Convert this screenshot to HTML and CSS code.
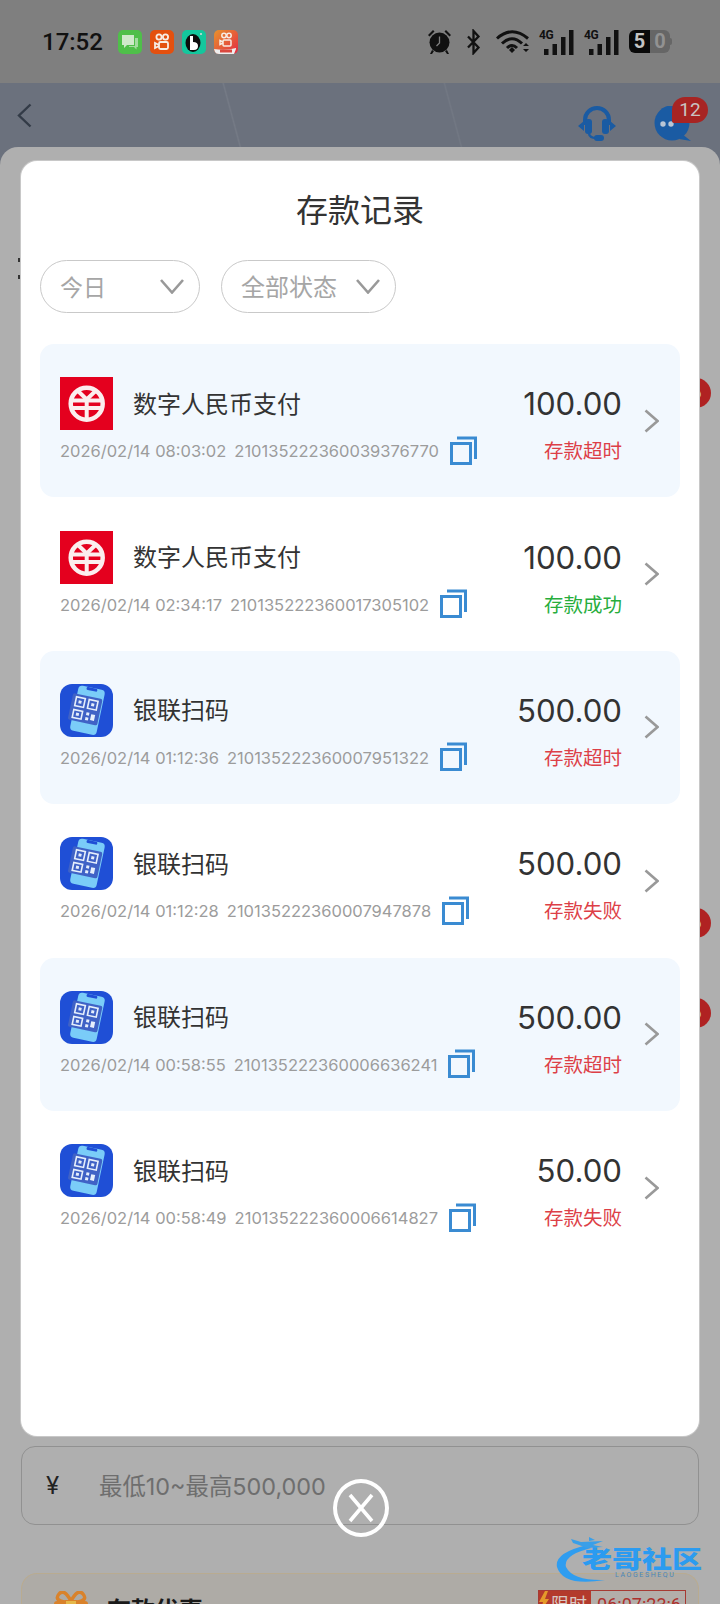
FILE: index.html
```html
<!DOCTYPE html>
<html lang="zh-CN">
<head>
    <meta charset="UTF-8">
    <meta name="viewport" content="width=device-width, initial-scale=1.0">
    <title>存款记录</title>
    <link rel="stylesheet" href="styles.css">
</head>
<body>

    <svg class="icon-defs" aria-hidden="true">
        <symbol id="i-yuan" viewBox="0 0 53 53">
            <rect width="53" height="53" fill="#e4001e"/>
            <circle cx="26.7" cy="26.7" r="16" fill="none" stroke="#fbeeee" stroke-width="4.500"/>
            <path d="M17 13l9.700 9.500L36.500 13" fill="none" stroke="#fbeeee" stroke-width="4"/>
            <path d="M12 23.500h29.500M12 31h29.500M26.700 22V42" fill="none" stroke="#fbeeee" stroke-width="4"/>
        </symbol>
        <symbol id="i-scan" viewBox="0 0 53 53">
            <rect width="53" height="53" rx="12" fill="#1f4fd6"/>
            <g transform="rotate(12 26 26)">
                <rect x="14" y="3" width="27" height="46" rx="4" fill="#7accf8"/>
                <rect x="22" y="3" width="11" height="3" rx="1.500" fill="#1f4fd6"/>
                <rect x="10" y="12" width="30" height="27" rx="2" fill="#3f62c6"/>
                <g fill="none" stroke="#e6effc" stroke-width="1.600">
                    <rect x="14" y="15" width="9" height="9"/>
                    <rect x="27" y="15" width="9" height="9"/>
                    <rect x="14" y="28" width="9" height="8"/>
                </g>
                <g fill="#e6effc">
                    <rect x="17" y="18" width="3" height="3"/>
                    <rect x="30" y="18" width="3" height="3"/>
                    <rect x="17" y="30.500" width="3" height="3"/>
                    <rect x="27" y="28" width="3" height="3"/>
                    <rect x="32" y="29" width="4" height="6"/>
                    <rect x="27" y="33" width="3" height="3"/>
                </g>
            </g>
        </symbol>
        <symbol id="i-copy" viewBox="0 0 27 29">
            <rect x="1.500" y="7.500" width="19" height="20" fill="none" stroke="#3a8bd2" stroke-width="3"/>
            <path d="M7 2h18.500v21" fill="none" stroke="#3a8bd2" stroke-width="3"/>
        </symbol>
        <symbol id="i-right" viewBox="0 0 15 24">
            <path d="M1.500 1.500L13.500 12L1.500 22.500" fill="none" stroke="#999" stroke-width="2.600"/>
        </symbol>
        <symbol id="i-down" viewBox="0 0 24 15">
            <path d="M1 1L12 13.500L23 1" fill="none" stroke="#999" stroke-width="2.600"/>
        </symbol>
        <symbol id="i-cell" viewBox="0 0 35 26">
            <rect x="5" y="20" width="4.500" height="6"/>
            <rect x="13.500" y="15" width="4.500" height="11"/>
            <rect x="22" y="8" width="4.500" height="18"/>
            <rect x="30" y="1" width="4.500" height="25"/>
        </symbol>
    </svg>

    <div class="page">
        <div class="status-bar">
            <span class="clock">17:52</span>
            <div class="app-tiles">
                <svg class="tile" viewBox="0 0 24 24">
                    <rect width="24" height="24" rx="5" fill="#4fbf4a"/>
                    <path d="M4 5h12v10H9l-3 3v-3H4z" fill="#cfe9cb"/>
                    <path d="M17 8h3v9h-1.500v2.500L16 17h-5v-1h6z" fill="#a3dca0"/>
                </svg>
                <svg class="tile" viewBox="0 0 24 24">
                    <rect width="24" height="24" rx="5" fill="#e4500f"/>
                    <g fill="none" stroke="#f7ece4" stroke-width="1.800">
                        <circle cx="9" cy="7" r="2.600"/>
                        <circle cx="15.500" cy="7" r="2.600"/>
                        <rect x="9" y="12" width="9" height="7" rx="1.500"/>
                        <path d="M9 15l-4-2v5l4-2"/>
                    </g>
                </svg>
                <svg class="tile" viewBox="0 0 24 24">
                    <rect width="24" height="24" rx="5" fill="#14c79d"/>
                    <ellipse cx="11" cy="13" rx="7.500" ry="9" fill="#0d0d0d"/>
                    <path d="M8 6h3v6q5 0 5 4t-4 4H8z" fill="#fff"/>
                    <circle cx="19" cy="4" r="1" fill="#ddd"/>
                </svg>
                <svg class="tile" viewBox="0 0 24 24">
                    <defs>
                        <linearGradient id="tile-fade" x1="0" y1="0" x2="1" y2="1">
                            <stop offset="0" stop-color="#e8932c"/>
                            <stop offset="1" stop-color="#e32b45"/>
                        </linearGradient>
                    </defs>
                    <rect width="24" height="24" rx="5" fill="url(#tile-fade)"/>
                    <g fill="none" stroke="#f7ece4" stroke-width="1.500">
                        <circle cx="10" cy="5.500" r="2.200"/>
                        <circle cx="15" cy="5.500" r="2.200"/>
                        <rect x="9" y="10" width="8" height="6" rx="1"/>
                        <path d="M9 12l-3-1.500v4L9 13"/>
                    </g>
                    <path d="M0 19q12 2 22-1v1l-2 5H5q-3 0-4-2z" fill="#eee"/>
                    <rect x="6" y="19.500" width="12" height="3" fill="#d9483f"/>
                </svg>
            </div>
            <div class="status-icons">
                <svg class="icon-alarm" viewBox="0 0 25 26">
                    <path d="M1 6l5-5 1.500 1.500-5 5zM24 6l-5-5-1.500 1.500 5 5zM5 21l-2 4h2l2-3zM20 21l2 4h-2l-2-3z" fill="#111"/>
                    <circle cx="12.500" cy="13.500" r="10" fill="#111"/>
                    <path d="M12.500 7.500v6.500l-3 3" fill="none" stroke="#7f7f7f" stroke-width="1.300"/>
                </svg>
                <svg class="icon-bt" viewBox="0 0 15 26">
                    <path d="M2 7.500L12.500 18.500L7.500 24V2L12.500 7.500L2 18.500" fill="none" stroke="#111" stroke-width="2.300"/>
                </svg>
                <svg class="icon-wifi" viewBox="0 0 33 25">
                    <g fill="none" stroke="#111" stroke-width="3">
                        <path d="M1 9.500Q16-4 32 9.500"/>
                        <path d="M6 14.500Q16 5 26 14.500"/>
                        <path d="M11 19Q16 14 21 19"/>
                    </g>
                    <path d="M13 21l3-3 3 3-3 3z" fill="#111"/>
                    <path d="M27 17h6l-3-3zM27 20h6l-3 3z" fill="#111"/>
                </svg>
                <div class="cell">
                    <span class="cell-tag">4G</span>
                    <svg class="cell-bars"><use href="#i-cell"/></svg>
                </div>
                <div class="cell">
                    <span class="cell-tag">4G</span>
                    <svg class="cell-bars"><use href="#i-cell"/></svg>
                </div>
                <div class="battery">
                    <span class="battery-full">5</span><span class="battery-empty">0</span>
                </div>
            </div>
        </div>

        <div class="app-bar">
            <svg class="back-icon" viewBox="0 0 15 25">
                <path d="M13.500 1.500L2 12.500L13.500 23.500" fill="none" stroke="#333b47" stroke-width="2.400"/>
            </svg>
            <div class="app-actions">
                <svg class="icon-headset" viewBox="0 0 40 36">
                    <path d="M8 19V14a12 12 0 0 1 24 0v5" fill="none" stroke="#1a5ba3" stroke-width="4"/>
                    <rect x="8" y="13" width="7" height="15" rx="3" fill="#1a5ba3"/>
                    <rect x="25" y="13" width="7" height="15" rx="3" fill="#1a5ba3"/>
                    <path d="M1 20l6-5v10zM39 20l-6-5v10z" fill="#1a5ba3"/>
                    <path d="M12 28q1 4 7 4" fill="none" stroke="#1a5ba3" stroke-width="2.400"/>
                    <rect x="17" y="29" width="10" height="6" rx="3" fill="#1a5ba3"/>
                </svg>
                <div class="chat">
                    <svg class="icon-chat" viewBox="0 0 38 36">
                        <circle cx="18" cy="17" r="17.500" fill="#1a5ba3"/>
                        <path d="M28 28l9 7-12-2z" fill="#1a5ba3"/>
                        <circle cx="9" cy="18" r="2.700" fill="#b9c6d6"/>
                        <circle cx="17" cy="18" r="2.700" fill="#b9c6d6"/>
                    </svg>
                    <span class="chat-count">12</span>
                </div>
            </div>
        </div>

        <div class="sheet">
            <span class="peek-marks"></span>
            <span class="peek-dot peek-dot-a">6</span>
            <span class="peek-dot peek-dot-b">6</span>
            <span class="peek-dot peek-dot-c">6</span>

            <div class="modal">
                <h2 class="modal-title">存款记录</h2>
                <div class="filters">
                    <div class="pill pill-day">
                        <span class="pill-text">今日</span>
                        <svg class="pill-arrow"><use href="#i-down"/></svg>
                    </div>
                    <div class="pill pill-state">
                        <span class="pill-text">全部状态</span>
                        <svg class="pill-arrow"><use href="#i-down"/></svg>
                    </div>
                </div>

                <div class="records">
                    <div class="record shaded">
                        <div class="record-main">
                            <div class="record-head">
                                <svg class="pay-icon"><use href="#i-yuan"/></svg>
                                <span class="pay-name">数字人民币支付</span>
                            </div>
                            <div class="record-meta">
                                <span>2026/02/14 08:03:02</span>
                                <span>210135222360039376770</span>
                                <svg class="copy-icon"><use href="#i-copy"/></svg>
                            </div>
                        </div>
                        <div class="record-side">
                            <div class="amount">100.00</div>
                            <div class="state failed">存款超时</div>
                        </div>
                        <svg class="row-arrow"><use href="#i-right"/></svg>
                    </div>

                    <div class="record">
                        <div class="record-main">
                            <div class="record-head">
                                <svg class="pay-icon"><use href="#i-yuan"/></svg>
                                <span class="pay-name">数字人民币支付</span>
                            </div>
                            <div class="record-meta">
                                <span>2026/02/14 02:34:17</span>
                                <span>210135222360017305102</span>
                                <svg class="copy-icon"><use href="#i-copy"/></svg>
                            </div>
                        </div>
                        <div class="record-side">
                            <div class="amount">100.00</div>
                            <div class="state done">存款成功</div>
                        </div>
                        <svg class="row-arrow"><use href="#i-right"/></svg>
                    </div>

                    <div class="record shaded">
                        <div class="record-main">
                            <div class="record-head">
                                <svg class="pay-icon"><use href="#i-scan"/></svg>
                                <span class="pay-name">银联扫码</span>
                            </div>
                            <div class="record-meta">
                                <span>2026/02/14 01:12:36</span>
                                <span>210135222360007951322</span>
                                <svg class="copy-icon"><use href="#i-copy"/></svg>
                            </div>
                        </div>
                        <div class="record-side">
                            <div class="amount">500.00</div>
                            <div class="state failed">存款超时</div>
                        </div>
                        <svg class="row-arrow"><use href="#i-right"/></svg>
                    </div>

                    <div class="record">
                        <div class="record-main">
                            <div class="record-head">
                                <svg class="pay-icon"><use href="#i-scan"/></svg>
                                <span class="pay-name">银联扫码</span>
                            </div>
                            <div class="record-meta">
                                <span>2026/02/14 01:12:28</span>
                                <span>210135222360007947878</span>
                                <svg class="copy-icon"><use href="#i-copy"/></svg>
                            </div>
                        </div>
                        <div class="record-side">
                            <div class="amount">500.00</div>
                            <div class="state failed">存款失败</div>
                        </div>
                        <svg class="row-arrow"><use href="#i-right"/></svg>
                    </div>

                    <div class="record shaded">
                        <div class="record-main">
                            <div class="record-head">
                                <svg class="pay-icon"><use href="#i-scan"/></svg>
                                <span class="pay-name">银联扫码</span>
                            </div>
                            <div class="record-meta">
                                <span>2026/02/14 00:58:55</span>
                                <span>210135222360006636241</span>
                                <svg class="copy-icon"><use href="#i-copy"/></svg>
                            </div>
                        </div>
                        <div class="record-side">
                            <div class="amount">500.00</div>
                            <div class="state failed">存款超时</div>
                        </div>
                        <svg class="row-arrow"><use href="#i-right"/></svg>
                    </div>

                    <div class="record">
                        <div class="record-main">
                            <div class="record-head">
                                <svg class="pay-icon"><use href="#i-scan"/></svg>
                                <span class="pay-name">银联扫码</span>
                            </div>
                            <div class="record-meta">
                                <span>2026/02/14 00:58:49</span>
                                <span>210135222360006614827</span>
                                <svg class="copy-icon"><use href="#i-copy"/></svg>
                            </div>
                        </div>
                        <div class="record-side">
                            <div class="amount">50.00</div>
                            <div class="state failed">存款失败</div>
                        </div>
                        <svg class="row-arrow"><use href="#i-right"/></svg>
                    </div>
                </div>
            </div>

            <div class="money-field">
                <span class="money-sign">¥</span>
                <span class="money-hint">最低10~最高500,000</span>
            </div>

            <div class="promo">
                <svg class="promo-gift" viewBox="0 0 34 30">
                    <path d="M17 10Q10-3 5 3t5 8zM17 10Q24-3 29 3t-5 8z" fill="none" stroke="#d9822b" stroke-width="3.500"/>
                    <rect x="0" y="10" width="34" height="20" rx="3" fill="#d9822b"/>
                    <rect x="12" y="10" width="10" height="20" fill="#e5b84a"/>
                </svg>
                <span class="promo-title">存款优惠</span>
                <div class="promo-timer">
                    <span class="promo-flash"><svg class="promo-bolt" viewBox="0 0 10 20"><path d="M6 0L0 11h4l-2 9 8-12H6l3-8z" fill="#e59a2a"/></svg>限时</span>
                    <span class="promo-count">06:07:23:6</span>
                </div>
            </div>
        </div>

        <button class="close-btn" aria-label="关闭">
            <svg class="close-x" viewBox="0 0 26 30">
                <path d="M2 2L24 28M24 2L2 28" fill="none" stroke="#fff" stroke-width="3.600"/>
            </svg>
        </button>

        <div class="watermark">
            <svg class="watermark-mark" viewBox="0 0 150 48">
                <path d="M32 8Q-1 16 2 30Q8 50 50 43Q18 44 11 30Q8 18 36 11z" fill="#2f9df0"/>
                <path d="M16 2l10 3 22-1-10 4 10 2-16 1-8-3-6-2zM34 0l6 3-6 1z" fill="#3a9fe8"/>
            </svg>
            <span class="watermark-name">老哥社区</span>
            <span class="watermark-sub">LAOGESHEQU</span>
        </div>
    </div>

</body>
</html>
```

FILE: styles.css
```css
body, html { margin: 0; padding: 0; height: 100%; overflow: hidden; background: #6b717d; font-family: Inter, 'Noto Sans CJK SC', sans-serif; }
.icon-defs { position: absolute; width: 0; height: 0; }
.page { position: relative; height: 1604px; overflow: hidden; display: flex; flex-direction: column; background: #6b717d; }

/* status bar */
.status-bar { height: 83px; flex: none; background: #7f7f7f; display: flex; align-items: center; padding: 0 50px 0 42px; box-sizing: border-box; }
.clock { width: 76px; font-family: Roboto, sans-serif; font-size: 24px; font-weight: 500; color: #111; }
.app-tiles { display: flex; gap: 8px; }
.tile { width: 24px; height: 24px; display: block; }
.status-icons { margin-left: auto; display: flex; align-items: center; }
.icon-alarm { width: 25px; height: 26px; }
.icon-bt { width: 15px; height: 26px; margin-left: 14px; }
.icon-wifi { width: 33px; height: 25px; margin-left: 15px; }
.cell { position: relative; width: 35px; height: 26px; margin-left: 10px; }
.cell-bars { width: 35px; height: 26px; fill: #111; display: block; }
.cell-tag { position: absolute; left: 0; top: -1px; font-family: Roboto, sans-serif; font-size: 12px; font-weight: 700; line-height: 14px; color: #111; letter-spacing: -0.5px; }
.battery { position: relative; display: flex; margin-left: 10px; width: 41px; height: 23px; border-radius: 6px; font-family: Roboto, sans-serif; font-size: 20px; font-weight: 700; line-height: 23px; text-align: center; }
.battery-full { width: 21px; background: #0a0a0a; color: #c4c4c4; border-radius: 6px 0 0 6px; }
.battery-empty { width: 20px; background: #666; color: #929292; border-radius: 0 6px 6px 0; }
.battery::after { content: ""; position: absolute; right: -2px; top: 8px; width: 2px; height: 7px; background: #666; border-radius: 0 2px 2px 0; }

/* page header behind the sheet */
.app-bar { height: 64px; flex: none; display: flex; align-items: flex-start; padding: 20px 12px 0 17px; box-sizing: border-box; background: linear-gradient(75deg, transparent 32.4%, rgba(255,255,255,0.07) 32.6%, transparent 32.8%, transparent 62.4%, rgba(255,255,255,0.05) 62.6%, transparent 62.8%); }
.back-icon { width: 15px; height: 25px; }
.app-actions { margin-left: auto; display: flex; padding-top: 3px; }
.icon-headset { width: 40px; height: 36px; }
.chat { position: relative; width: 38px; height: 36px; margin-left: 37px; margin-right: 16px; }
.icon-chat { width: 38px; height: 36px; display: block; }
.chat-count { position: absolute; left: 18px; top: -9px; width: 36px; height: 26px; background: #a72423; border-radius: 13px 13px 13px 2px; color: #c9c4c4; font-family: Roboto, sans-serif; font-size: 19px; line-height: 26px; text-align: center; }

/* dimmed sheet */
.sheet { position: relative; flex: 1; min-height: 0; background: #afafaf; border-radius: 18px 18px 0 0; padding: 14px 21px 0; }
.peek-marks { position: absolute; left: 18px; top: 111px; width: 3px; height: 4px; background: #333; box-shadow: 0 17px 0 #333; }
.peek-dot { position: absolute; left: 681px; width: 30px; height: 30px; border-radius: 50%; background: #b02222; color: #cfc5c5; font-family: Roboto, sans-serif; font-size: 19px; font-weight: 700; line-height: 30px; text-align: center; }
.peek-dot-a { top: 231px; }
.peek-dot-b { top: 761px; }
.peek-dot-c { top: 851px; }

/* modal */
.modal { position: relative; height: 1275px; background: #fff; border-radius: 16px; box-shadow: 0 0 0 1px #c8c8c8; }
.modal-title { margin: 0; height: 96px; font-size: 32px; font-weight: 400; line-height: 100px; color: #333; text-align: center; }
.filters { display: flex; gap: 21px; padding: 3px 19px 0; }
.pill { height: 53px; box-sizing: border-box; border: 1.5px solid #c9c9c9; border-radius: 27px; display: flex; align-items: center; justify-content: space-between; padding: 0 15px 0 19px; font-size: 23px; color: #a6a6a6; }
.pill-day { width: 160px; }
.pill-state { width: 175px; font-size: 24px; }
.pill-text { margin-top: -2px; }
.pill-arrow { width: 24px; height: 15px; }
.records { margin: 31px 19px 0; }
.record { height: 153.4px; box-sizing: border-box; display: flex; align-items: center; padding: 0 21px 0 20px; border-radius: 14px; }
.record.shaded { background: #f2f8fe; }
.record-main { flex: 1; min-width: 0; }
.record-head { display: flex; align-items: center; gap: 20px; height: 53px; }
.pay-icon { width: 53px; height: 53px; flex: none; }
.pay-name { font-size: 24px; color: #333; margin-top: -3px; }
.record-meta { display: flex; align-items: center; gap: 8px; height: 28px; margin-top: 6px; font-size: 16.5px; color: #9c9c9c; white-space: nowrap; }
.record-meta span { margin-top: 2px; }
.copy-icon { width: 27px; height: 29px; flex: none; margin-left: 3px; }
.record-side { text-align: right; }
.amount { height: 53px; font-size: 31.2px; line-height: 55px; color: #333; }
.state { height: 28px; margin-top: 6px; font-size: 19.5px; line-height: 30px; }
.state.failed { color: #dd3f47; }
.state.done { color: #27ad3c; }
.row-arrow { width: 15px; height: 24px; flex: none; margin-left: 22px; }

/* form under the modal */
.money-field { height: 79px; box-sizing: border-box; margin-top: 10px; border: 1.5px solid #919191; border-radius: 14px; display: flex; align-items: center; padding-left: 24px; color: #6e6e6e; }
.money-sign { width: 53px; font-size: 24px; color: #222; }
.money-hint { font-size: 23.4px; margin-top: -2px; }
.promo { height: 120px; box-sizing: border-box; margin-top: 48px; border: 1.5px solid #b9ab90; border-bottom: 0; border-radius: 16px 16px 0 0; background: #aeaba6; display: flex; align-items: flex-start; padding: 16px 12px 0 32px; }
.promo-gift { width: 34px; height: 30px; flex: none; margin-top: 1px; }
.promo-title { margin-left: 19px; margin-top: 5px; font-size: 24px; font-weight: 700; line-height: 32px; color: #1a1a1a; }
.promo-timer { margin-left: auto; display: flex; height: 32px; border: 1px solid #a63a33; box-sizing: border-box; font-family: Roboto, 'Noto Sans CJK SC', sans-serif; font-size: 18px; line-height: 27px; }
.promo-flash { display: flex; background: #b33a2c; color: #d8c8c4; padding-right: 4px; }
.promo-bolt { width: 10px; height: 20px; margin-right: 2px; }
.promo-count { padding: 0 4px 0 6px; color: #ad302c; background: #b3aeaa; }

/* overlays */
.close-btn { position: absolute; left: 333px; top: 1479px; width: 56px; height: 58px; padding: 0; box-sizing: border-box; background: none; border: 4px solid #fff; border-radius: 50%; display: flex; align-items: center; justify-content: center; }
.close-x { width: 26px; height: 30px; }
.watermark { position: absolute; left: 555px; top: 1537px; width: 150px; height: 48px; }
.watermark-mark { position: absolute; left: 0; top: 0; width: 150px; height: 48px; }
.watermark-name { position: absolute; left: 27px; top: 13px; font-size: 24px; font-weight: 900; line-height: 20px; white-space: nowrap; color: #2b9bf0; transform: scaleX(1.25); transform-origin: left; }
.watermark-sub { position: absolute; left: 60px; top: 33px; font-family: Roboto, sans-serif; font-size: 7px; line-height: 10px; letter-spacing: 1.6px; color: #4a86b8; }
```
